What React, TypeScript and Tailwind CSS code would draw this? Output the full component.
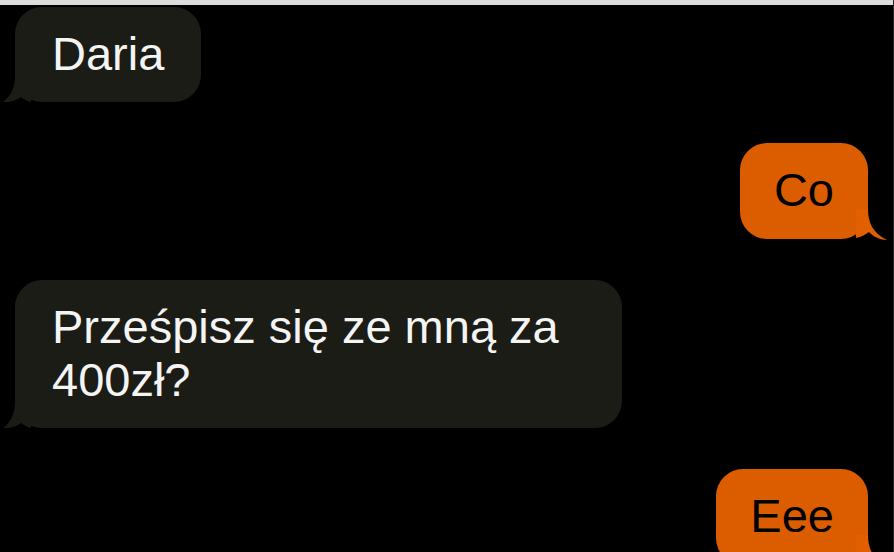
import React from 'react';

type Msg = { id: number; text: string; mine: boolean };

const messages: Msg[] = [
  { id: 1, text: 'Daria', mine: false },
  { id: 2, text: 'Co', mine: true },
  { id: 3, text: 'Prześpisz się ze mną za 400zł?', mine: false },
  { id: 4, text: 'Eee', mine: true },
];

function LeftTail() {
  return (
    <svg
      className="absolute left-[-12px] bottom-[0px]"
      width="28"
      height="26"
      viewBox="0 0 28 26"
    >
      <path d="M28 0 L12 0 C12 12 8 20 0 26 C7 26.5 13 24.5 18 21 C21 23.5 24 25 28 26 Z" fill="#1c1c17" />
    </svg>
  );
}

function RightTail() {
  return (
    <svg
      className="absolute right-[-20px] bottom-[-1px]"
      width="32"
      height="31"
      viewBox="0 0 32 31"
    >
      <path d="M0 0 L12 0 C12 14 17 24 31 31 C23 30.5 17 27.5 13 23 C9 26 5 28 0 29 Z" fill="#e25f00" />
    </svg>
  );
}

function Bubble({ msg }: { msg: Msg }) {
  if (msg.mine) {
    return (
      <div className="relative self-end rounded-[27px] bg-[#dc5c00] px-[34px] pt-[20px] pb-[23px] text-black">
        <RightTail />
        <span className="relative">{msg.text}</span>
      </div>
    );
  }
  return (
    <div className="relative self-start max-w-[607px] rounded-[27px] bg-[#1c1c17] px-[37px] pt-[20px] pb-[22px] text-[#f4f4f4]">
      <LeftTail />
      <span className="relative">{msg.text}</span>
    </div>
  );
}

export default function App() {
  return (
    <div className="h-[552px] w-full overflow-hidden bg-black border-r border-[#262626]">
      <div className="h-[5px] bg-[#dcdcdc]" />
      <div
        className="flex flex-col gap-[41px] pt-[2px] pl-[15px] pr-[25px] text-[47px] leading-[53px]"
        style={{ fontFamily: '"Liberation Sans", Arial, sans-serif' }}
      >
        {messages.map(m => (
          <Bubble key={m.id} msg={m} />
        ))}
      </div>
    </div>
  );
}
